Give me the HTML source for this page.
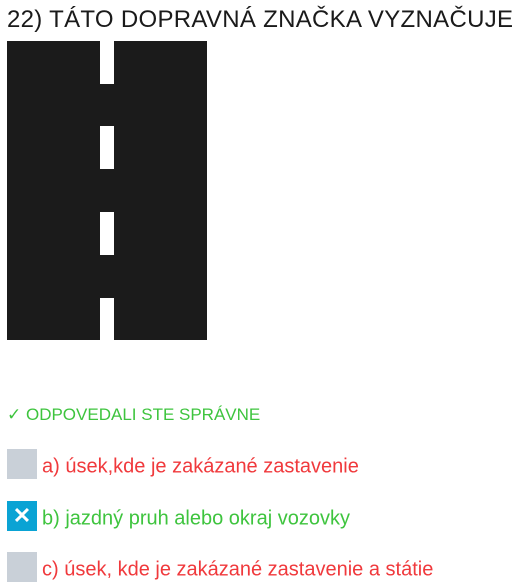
<!DOCTYPE html>
<html><head><meta charset="utf-8"><style>
body{margin:0;background:#fff;width:524px;height:586px;position:relative;overflow:hidden;font-family:"Liberation Sans",sans-serif}
.t{position:absolute;left:7px;top:6px;font-size:24px;color:#1a1a1a;white-space:nowrap;letter-spacing:0.3px}
.road{position:absolute;left:7px;top:41px;width:200px;height:299px;background:#1b1b1b}
.d{position:absolute;left:93px;width:14px;height:43px;background:#fff}
.ok{position:absolute;left:7px;top:405px;font-size:17px;color:#3ec43e;white-space:nowrap}
.o{position:absolute;left:7px;font-size:20px;white-space:nowrap}
.b{display:inline-block;width:30px;height:30px;background:#c9d0d8;vertical-align:middle;margin-right:5px;position:relative;top:-3px}
.x{background:#0aa3d4;color:#fff;text-align:center;line-height:30px;font-size:22px;font-weight:bold}
</style></head><body>
<div class="t">22) TÁTO DOPRAVNÁ ZNAČKA VYZNAČUJE</div>
<div class="road"><div class="d" style="top:0"></div><div class="d" style="top:85px"></div><div class="d" style="top:171px"></div><div class="d" style="top:257px;height:42px"></div></div>
<div class="ok">✓ ODPOVEDALI STE SPRÁVNE</div>
<div class="o" style="top:452px;color:#f0393c"><span class="b"></span>a) úsek,kde je zakázané zastavenie</div>
<div class="o" style="top:504px;color:#3ec43e"><span class="b x">✕</span>b) jazdný pruh alebo okraj vozovky</div>
<div class="o" style="top:555px;color:#f0393c"><span class="b"></span>c) úsek, kde je zakázané zastavenie a státie</div>
</body></html>
